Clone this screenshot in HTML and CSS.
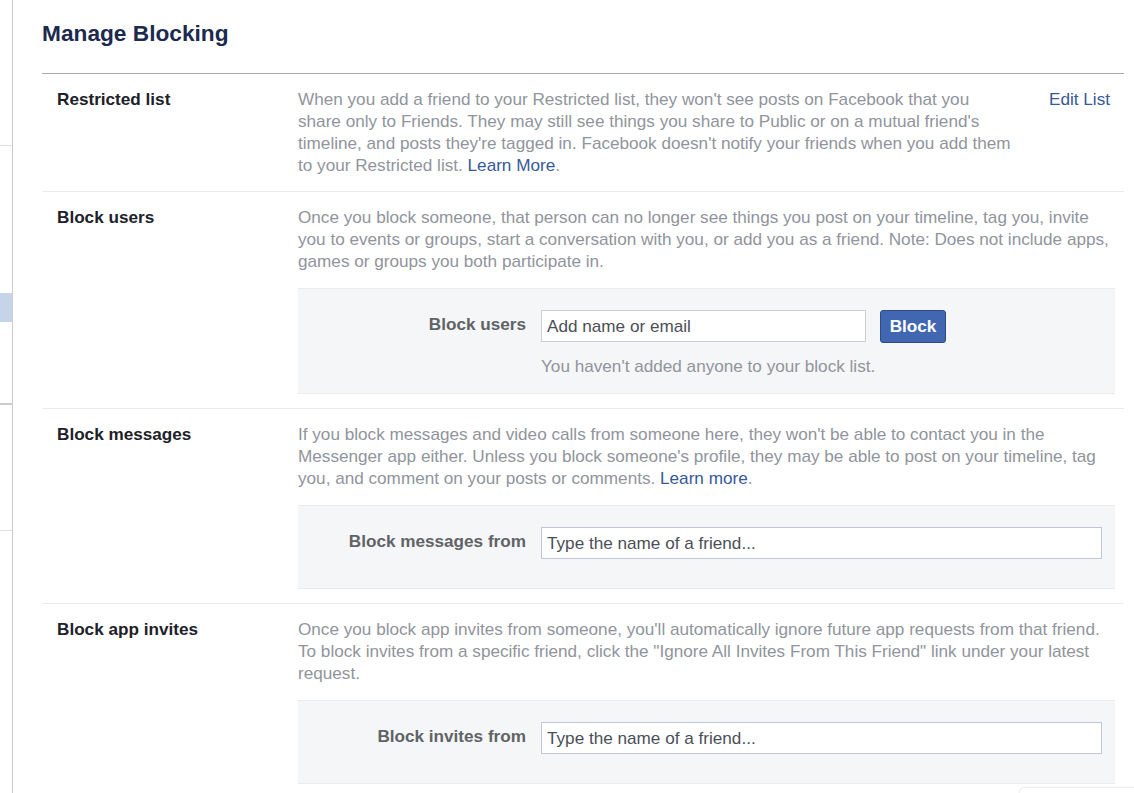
FILE: index.html
```html
<!DOCTYPE html>
<html lang="en">
<head>
<meta charset="utf-8">
<title>Manage Blocking</title>
<link rel="stylesheet" href="styles.css">
</head>
<body>
<div class="page">
  <aside class="side">
    <div class="side-a"></div>
    <div class="side-b"></div>
    <div class="side-sel"></div>
    <div class="side-c"></div>
    <div class="side-d"></div>
  </aside>
  <main class="main">
    <div class="head"><h2 class="title">Manage Blocking</h2></div>

    <section class="row row-first">
      <div class="label">Restricted list</div>
      <div class="desc">When you add a friend to your Restricted list, they won't see posts on Facebook that you share only to Friends. They may still see things you share to Public or on a mutual friend's timeline, and posts they're tagged in. Facebook doesn't notify your friends when you add them to your Restricted list. <a class="link" href="#">Learn More</a>.</div>
      <div class="edit"><a class="link" href="#">Edit List</a></div>
    </section>

    <section class="row">
      <div class="label">Block users</div>
      <div class="desc">Once you block someone, that person can no longer see things you post on your timeline, tag you, invite you to events or groups, start a conversation with you, or add you as a friend. Note: Does not include apps, games or groups you both participate in.</div>
      <div class="box">
        <div class="box-label">Block users</div>
        <div class="box-field">
          <input class="field field-short" type="text" placeholder="Add name or email">
          <button class="btn" type="button">Block</button>
        </div>
        <div class="box-help">You haven't added anyone to your block list.</div>
      </div>
    </section>

    <section class="row">
      <div class="label">Block messages</div>
      <div class="desc">If you block messages and video calls from someone here, they won't be able to contact you in the Messenger app either. Unless you block someone's profile, they may be able to post on your timeline, tag you, and comment on your posts or comments. <a class="link" href="#">Learn more</a>.</div>
      <div class="box box-tall">
        <div class="box-label">Block messages from</div>
        <div class="box-field">
          <input class="field field-full" type="text" placeholder="Type the name of a friend...">
        </div>
      </div>
    </section>

    <section class="row">
      <div class="label">Block app invites</div>
      <div class="desc">Once you block app invites from someone, you'll automatically ignore future app requests from that friend. To block invites from a specific friend, click the "Ignore All Invites From This Friend" link under your latest request.</div>
      <div class="box box-tall">
        <div class="box-label">Block invites from</div>
        <div class="box-field">
          <input class="field field-full" type="text" placeholder="Type the name of a friend...">
        </div>
      </div>
    </section>
  </main>
  <div class="popup"></div>
</div>
</body>
</html>
```

FILE: styles.css
```css
html, body {
  margin: 0;
  padding: 0;
  background: #ffffff;
}

body {
  font-family: "Liberation Sans", Arial, sans-serif;
  font-size: 17.15px;
  line-height: 22px;
  color: #1d2129;
  overflow: hidden;
}

.page {
  display: flex;
  align-items: flex-start;
  position: relative;
  min-height: 793px;
}

/* left sidebar remnant */
.side {
  width: 12px;
  flex: none;
  border-right: 1px solid #cccccc;
  min-height: 793px;
}
.side-a { height: 145px; border-bottom: 1px solid #dddfe2; }
.side-b { height: 147px; }
.side-sel { height: 29px; background: #c6d4e9; }
.side-c { height: 81px; border-bottom: 2px solid #cccccc; }
.side-d { height: 125px; border-bottom: 1px solid #dddfe2; }

.main {
  margin-left: 29px;
  width: 1082px;
  flex: none;
}

.head {
  padding: 19px 0 26px;
  border-bottom: 1px solid #aaaaaa;
}

.title {
  margin: 0;
  font-size: 22.7px;
  line-height: 28px;
  font-weight: bold;
  color: #1b2a4e;
}

.row {
  display: grid;
  grid-template-columns: 241px 1fr;
  padding: 14px 9px 14px 15px;
  border-bottom: 1px solid #e9ebee;
}

.row-first {
  grid-template-columns: 241px 714px 1fr;
}

.label {
  font-weight: bold;
  color: #1d2129;
}

.desc {
  color: #90949c;
  padding-bottom: 1px;
}

.edit {
  padding-left: 37px;
}

.link {
  color: #365899;
  text-decoration: none;
}

.box {
  grid-column: 2;
  margin-top: 15px;
  background: #f5f6f7;
  border-top: 1px solid #e9ebee;
  border-bottom: 1px solid #e9ebee;
  padding: 21px 13px 16px 0;
  display: grid;
  grid-template-columns: 228px 1fr;
  column-gap: 15px;
}

.box-tall {
  padding-bottom: 29px;
}

.box-label {
  text-align: right;
  font-weight: bold;
  color: #606366;
  padding-top: 3px;
}

.box-field {
  display: flex;
  align-items: flex-start;
  gap: 14px;
}

.box-help {
  grid-column: 2;
  margin-top: 12px;
  color: #90949c;
}

.field {
  box-sizing: border-box;
  height: 32px;
  margin: 0;
  padding: 0 5px;
  border: 1px solid #bdc7d8;
  background: #ffffff;
  font-family: "Liberation Sans", Arial, sans-serif;
  font-size: 17.15px;
  color: #1d2129;
  outline: none;
  border-radius: 0;
}

.field::placeholder {
  color: #4b4f56;
  opacity: 1;
}

.field-short {
  width: 325px;
  border-color: #ccd0d5;
}

.field-full {
  width: 561px;
}

.btn {
  box-sizing: border-box;
  width: 66px;
  height: 33px;
  margin: 0;
  padding: 0;
  background: #4267b2;
  border: 1px solid #2f4b85;
  border-radius: 3px;
  color: #ffffff;
  font-family: "Liberation Sans", Arial, sans-serif;
  font-size: 17.15px;
  font-weight: bold;
}

.popup {
  position: absolute;
  left: 1020px;
  top: 788px;
  width: 130px;
  height: 40px;
  background: #ffffff;
  border-radius: 5px 0 0 0;
  box-shadow: 0 0 3px rgba(0, 0, 0, 0.18);
}
```
